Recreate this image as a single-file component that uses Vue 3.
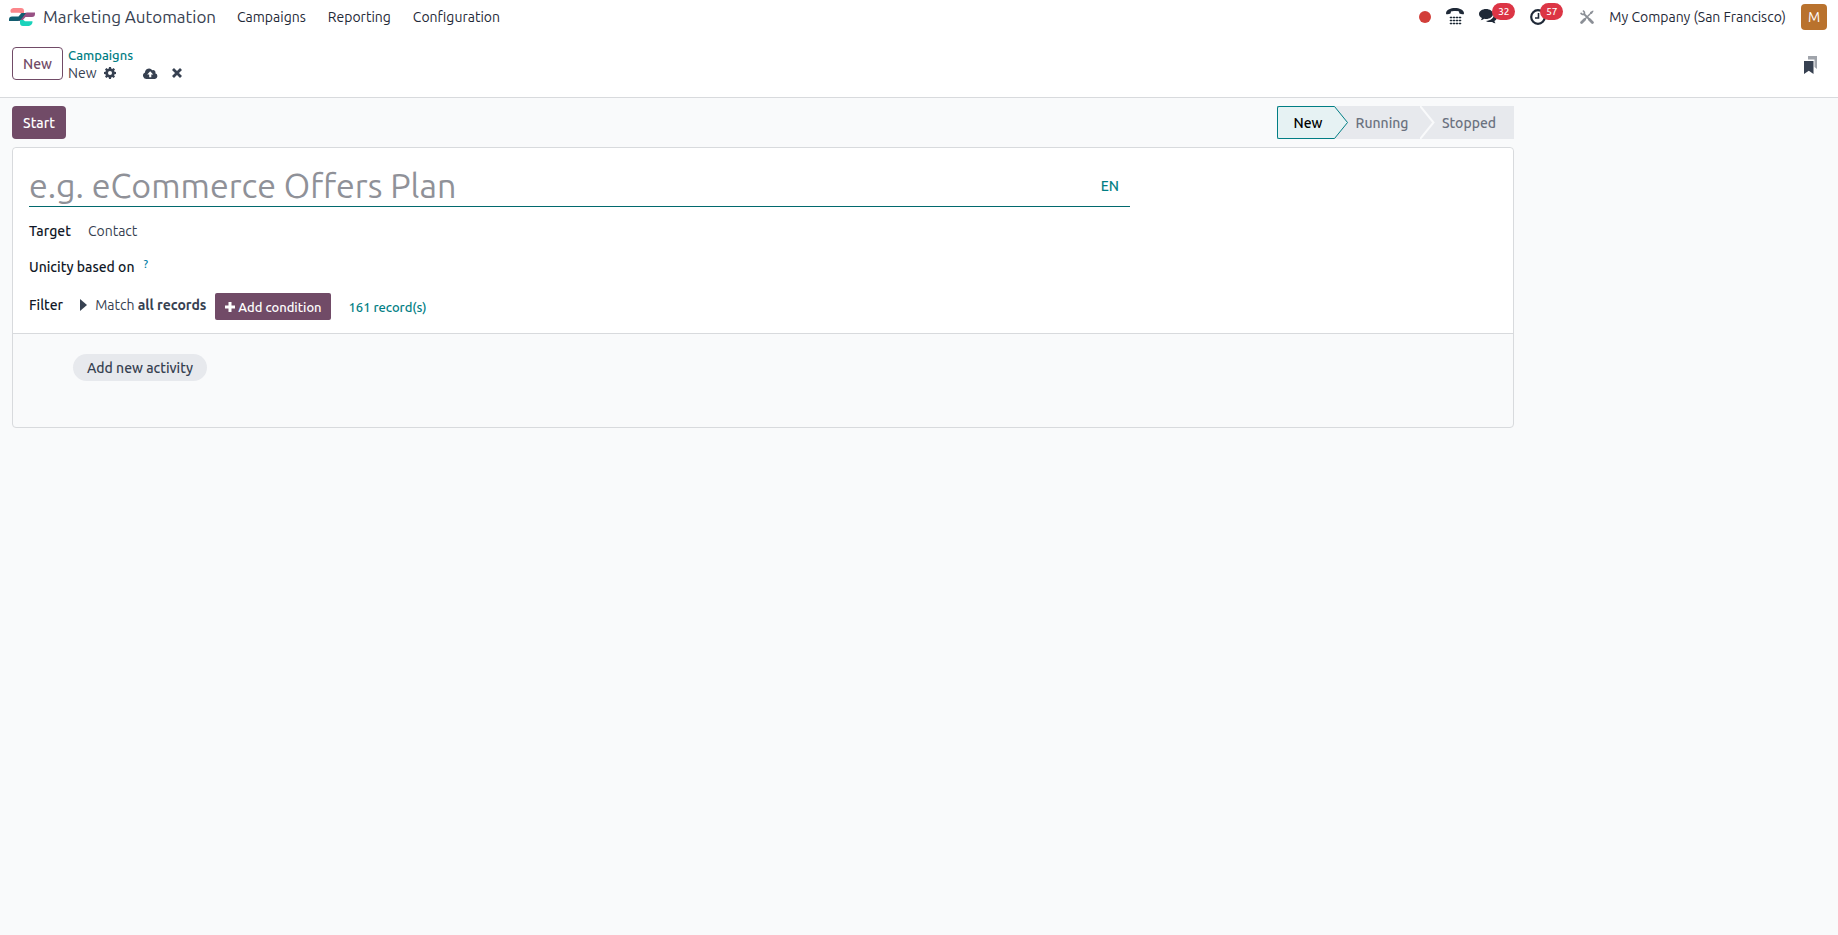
<script setup>
import { ref } from 'vue'

const name = ref('')
const menus = ['Campaigns', 'Reporting', 'Configuration']
const stages = ['New', 'Running', 'Stopped']
const current = ref('New')
</script>

<template>
  <div class="app">
    <header class="navbar">
      <a class="brand" href="#">
        <svg class="logo" viewBox="0 0 26 18" aria-hidden="true">
          <path d="M4.500 0H12a3 3 0 0 1 3 3v2.500h-2.500a2.500 2.500 0 0 1-2-.8H2A3 3 0 0 1 4.500 0z" fill="#fc868b" />
          <path d="M26 4.500V6a3 3 0 0 1-3 3h-6.500L13 13H9l5-6.500a5 5 0 0 1 4-2z" fill="#985184" />
          <path d="M0 13v-1.500a3 3 0 0 1 3-3h6.500L12.500 5H17l-5 6.500A4 4 0 0 1 9 13z" fill="#125d70" />
          <path d="M11 12h3.500l1.500 1.300h7.500A4.500 4.500 0 0 1 20 18h-6a3 3 0 0 1-3-3z" fill="#1ad3bb" />
        </svg>
        <span>Marketing Automation</span>
      </a>
      <nav class="menus">
        <a v-for="m in menus" :key="m" href="#">{{ m }}</a>
      </nav>
      <div class="systray">
        <button class="tray dot" aria-label="Recording"><span></span></button>
        <button class="tray phone" aria-label="Phone">
          <svg width="18" height="17" viewBox="0 0 18 17" fill="#1f2937">
            <path d="M9 0C4.500 0 1 1.800.2 4.200c-.3 1-.2 1.800.1 2 .5.300 3.700-.3 4.200-.7.500-.4.200-1.600.6-1.900C6.200 2.900 11.800 2.900 12.900 3.600c.4.300.1 1.500.6 1.900.5.400 3.700 1 4.200.7.300-.2.400-1 .1-2C17 1.800 13.500 0 9 0z" />
            <path d="M4 9h2v1H4zM7 9h2v1H7zM10 9h2v1h-2zM13 9h2v1h-2zM4 12h2v1H4zM7 12h2v1H7zM10 12h2v1h-2zM13 12h2v1h-2zM4 15h2v1H4zM7 15h2v1H7zM10 15h2v1h-2zM13 15h2v1h-2z" stroke="#1f2937" stroke-width=".5" />
          </svg>
        </button>
        <button class="tray chat" aria-label="Messages">
          <svg width="18" height="15" viewBox="0 0 18 15" fill="#1f2937">
            <path d="M7 0c3.900 0 7 2.200 7 5s-3.100 5-7 5c-.6 0-1.200-.1-1.800-.2-1 .8-2.200 1.300-3.500 1.400.6-.7 1-1.400 1.200-2.300C1.100 8 0 6.600 0 5c0-2.800 3.100-5 7-5z" />
            <path d="M15 4.500c1.800.9 3 2.300 3 3.800s-1 2.900-2.600 3.800c.2.900.6 1.500 1.200 2.200-1.300-.1-2.500-.6-3.500-1.400-2.300.5-4.500.1-6.200-1C11.500 11.800 15.400 9 15 4.500z" />
          </svg>
          <span class="badge">32</span>
        </button>
        <button class="tray clock" aria-label="Activities">
          <svg width="16" height="16" viewBox="0 0 16 16" fill="none" stroke="#1f2937">
            <circle cx="8" cy="8" r="6.800" stroke-width="2.200" />
            <path d="M8.500 4v5H5" stroke-width="1.600" />
          </svg>
          <span class="badge">57</span>
        </button>
        <button class="tray tools" aria-label="Developer tools">
          <svg width="14" height="14" viewBox="0 0 14 14" fill="none" stroke="#8b8f96">
            <path d="M1.600 12.400l3-3" stroke-width="2.800" stroke-linecap="round" />
            <path d="M5 9l5-5" stroke-width="1.400" />
            <path d="M9.500 4.500l.7-2.500L13 .4l.6.600L12 3.800z" fill="#8b8f96" stroke="none" />
            <path d="M3.500 3.500l6 6" stroke-width="1.800" />
            <path d="M.8 2.800a2.300 2.300 0 0 0 3.400 1.400A2.300 2.300 0 0 0 2.800.8" stroke-width="1.600" />
            <path d="M9.500 9.500l2.900 2.900" stroke-width="2.800" stroke-linecap="round" />
          </svg>
        </button>
        <button class="tray company">My Company (San Francisco)</button>
        <button class="avatar" aria-label="User menu">M</button>
      </div>
    </header>

    <section class="control">
      <button class="btn outline">New</button>
      <div class="crumbs">
        <a href="#">Campaigns</a>
        <div class="here">
          <span>New</span>
          <button class="icon" aria-label="Actions">
            <svg width="12" height="12" viewBox="0 0 12 12">
              <g fill="#374151">
                <circle cx="6" cy="6" r="4.600" />
                <path d="M5 0h2l.4 2.500h-2.800zM5 12h2l.4-2.500h-2.800zM0 5v2l2.500.4v-2.800zM12 5v2l-2.500.4v-2.800z" />
                <path d="M1 2.400L2.400 1l2 1.400-2 2zM9.600 1L11 2.400l-1.400 2-2-2zM1 9.600L2.400 11l2-1.400-2-2zM9.600 11L11 9.600l-1.400-2-2 2z" />
              </g>
              <circle cx="6" cy="6" r="2" fill="#fff" />
            </svg>
          </button>
          <button class="icon save" aria-label="Save">
            <svg width="15" height="11" viewBox="0 0 15 11">
              <path d="M3.500 11A3.400 3.400 0 0 1 2 4.500 4 4 0 0 1 9.300 2.200a2.300 2.300 0 0 1 3 3A3 3 0 0 1 12 11z" fill="#374151" />
              <path d="M7.200 3.200l3 3.200H8.300V9.200H6.200V6.400H4.200z" fill="#fff" />
            </svg>
          </button>
          <button class="icon discard" aria-label="Discard">
            <svg width="10" height="10" viewBox="0 0 10 10" stroke="#374151" stroke-width="2.800">
              <path d="M1 1l8 8M9 1l-8 8" />
            </svg>
          </button>
        </div>
      </div>
      <button class="icon bookmark" aria-label="Bookmarks">
        <svg width="13" height="18" viewBox="0 0 13 18">
          <path d="M4 0h9v13l-2.500-2V3.500H4z" fill="#a0a4ab" />
          <path d="M0 5h9.500v13L4.800 14.800 0 18z" fill="#374151" />
        </svg>
      </button>
    </section>

    <main class="content">
      <div class="form">
        <div class="statusbar">
          <button class="btn primary">Start</button>
          <div class="stages">
            <button
              v-for="s in stages"
              :key="s"
              class="stage"
              :class="{ active: s === current }"
              @click="current = s"
            >
              <svg v-if="s !== 'Stopped'" class="arrow" width="15" height="33" viewBox="0 0 15 33" aria-hidden="true">
                <path d="M0 .5h.5L13.500 16.500.5 32.500H0" />
              </svg>
              <span>{{ s }}</span>
            </button>
          </div>
        </div>

        <div class="sheet">
          <div class="fields">
            <div class="title">
              <input v-model="name" aria-label="Campaign name" placeholder="e.g. eCommerce Offers Plan" />
              <button class="lang">EN</button>
            </div>
            <div class="row target">
              <span class="label">Target</span>
              <span class="value">Contact</span>
            </div>
            <div class="row unicity">
              <span class="label">Unicity based on</span>
              <sup>?</sup>
            </div>
            <div class="row filter">
              <span class="label">Filter</span>
              <button class="match">
                <svg width="7" height="12" viewBox="0 0 7 12"><path d="M0 0l7 6-7 6z" fill="#374151" /></svg>
                <span>Match <b>all records</b></span>
              </button>
              <button class="add">
                <svg width="10" height="10" viewBox="0 0 10 10"><path d="M3.500 0h3v3.500H10v3H6.500V10h-3V6.500H0v-3h3.500z" fill="#fff" /></svg>
                <span>Add condition</span>
              </button>
              <a class="records" href="#">161 record(s)</a>
            </div>
          </div>
          <div class="activities">
            <button class="pill">Add new activity</button>
          </div>
        </div>
      </div>
    </main>
  </div>
</template>

<style>
html,
body {
  background: #f9fafb;
}
</style>

<style scoped>
.app {
  min-height: 100vh;
  background: #f9fafb;
  color: #374151;
  font: 14px/20px Ubuntu, 'Noto Sans', sans-serif;
}
.app * {
  box-sizing: border-box;
}
button {
  margin: 0;
  padding: 0;
  border: 0;
  background: none;
  color: inherit;
  font: inherit;
  white-space: nowrap;
  cursor: pointer;
}
a {
  color: #017e84;
  text-decoration: none;
}
svg {
  display: block;
  flex: none;
}
.navbar {
  display: flex;
  align-items: center;
  height: 33px;
  padding: 0 11px 0 9px;
  background: #fff;
}
.brand {
  display: flex;
  align-items: center;
  gap: 8px;
  width: 228px;
  color: #374151;
  font-size: 17px;
  white-space: nowrap;
}
.logo {
  width: 26px;
  height: 18px;
}
.menus {
  display: flex;
  gap: 22px;
}
.menus a {
  color: #1f2937;
}
.systray {
  display: flex;
  align-items: center;
  margin-left: auto;
  color: #1f2937;
}
.tray {
  position: relative;
}
.dot span {
  display: block;
  width: 12px;
  height: 12px;
  border-radius: 50%;
  background: #d23f3a;
}
.phone {
  margin-left: 15px;
}
.chat {
  margin-left: 15px;
}
.clock {
  margin-left: 33px;
}
.badge {
  position: absolute;
  left: 13px;
  top: -6px;
  width: 23px;
  height: 17px;
  border-radius: 9px;
  background: #dc3545;
  color: #fff;
  font-size: 10px;
  font-weight: 500;
  line-height: 17px;
}
.clock .badge {
  left: 10px;
}
.tools {
  margin-left: 34px;
}
.company {
  margin-left: 15px;
}
.avatar {
  width: 26px;
  height: 26px;
  margin-left: 15px;
  border-radius: 4px;
  background: #b9722d;
  color: #fff;
}
.control {
  display: flex;
  align-items: flex-start;
  height: 65px;
  padding: 14px 12px 0;
  border-bottom: 1px solid #d8dadd;
  background: #fff;
}
.btn {
  height: 33px;
  border-radius: 4px;
  font-weight: 500;
}
.outline {
  width: 51px;
  border: 1px solid #714b67;
  color: #714b67;
}
.primary {
  width: 54px;
  background: #714b67;
  color: #fff;
}
.crumbs {
  margin-left: 5px;
  line-height: 18px;
}
.crumbs > a {
  display: block;
  font-size: 13px;
  font-weight: 500;
  line-height: 17px;
}
.here {
  display: flex;
  align-items: center;
}
.here .icon {
  margin-left: 7px;
}
.here .save {
  margin-left: 27px;
}
.here .discard {
  margin-left: 14px;
}
.bookmark {
  margin: 9px 9px 0 auto;
}
.content {
  display: grid;
  grid-template-columns: minmax(0, 1fr) 324px;
  padding: 8px 0 0 12px;
}
.statusbar {
  display: flex;
  justify-content: space-between;
  height: 33px;
}
.stages {
  display: flex;
}
.stage {
  position: relative;
  width: 86px;
  padding-left: 10px;
  background: #e7e9ed;
  color: #6b7280;
  font-weight: 500;
}
.stage:first-child {
  width: 57px;
  padding-left: 4px;
  border: 1px solid #017e84;
  border-right: 0;
  border-radius: 2px 0 0 2px;
}
.stage:last-child {
  width: 94px;
  padding-left: 4px;
}
.stage.active {
  background: #e6f2f3;
  color: #000;
}
.arrow {
  position: absolute;
  z-index: 1;
  top: 0;
  left: 100%;
  fill: #e7e9ed;
  stroke: #f9fafb;
  stroke-width: 2;
}
.stage:first-child .arrow {
  top: -1px;
}
.active .arrow {
  fill: #e6f2f3;
  stroke: #017e84;
  stroke-width: 1;
}
.sheet {
  margin-top: 8px;
  border: 1px solid #d8dadd;
  border-radius: 4px;
}
.fields {
  padding: 16px 16px 13px;
  border-bottom: 1px solid #d8dadd;
  border-radius: 4px 4px 0 0;
  background: #fff;
}
.title {
  display: flex;
  width: 75%;
  height: 43px;
  border-bottom: 1px solid #01696e;
}
.title input {
  flex: 1;
  min-width: 0;
  padding: 0;
  border: 0;
  outline: 0;
  background: none;
  color: #374151;
  font: 34px/42px Ubuntu, 'Noto Sans', sans-serif;
}
.title input::placeholder {
  color: #8f9198;
  opacity: 1;
}
.lang {
  padding: 1px 11px 0;
  color: #017e84;
  font-weight: 500;
}
.row {
  display: flex;
  align-items: center;
}
.label {
  color: #111827;
  font-weight: 500;
}
.target {
  gap: 17px;
  margin-top: 14px;
}
.unicity {
  gap: 9px;
  margin-top: 16px;
}
sup {
  color: #0180a5;
  font-size: 11px;
  font-weight: 500;
  line-height: 12px;
  margin-bottom: 6px;
}
.filter {
  align-items: flex-start;
  height: 27px;
  margin-top: 16px;
  line-height: 24px;
}
.match {
  display: flex;
  align-items: center;
  gap: 8px;
  margin-left: 17px;
}
.match b {
  font-weight: 700;
}
.add {
  display: flex;
  align-items: center;
  justify-content: center;
  gap: 3px;
  width: 116px;
  height: 27px;
  margin-left: 9px;
  border-radius: 2px;
  background: #714b67;
  color: #fff;
  font-size: 13px;
  font-weight: 500;
}
.records {
  margin-left: 17px;
  font-size: 13px;
  font-weight: 500;
  line-height: 28px;
}
.activities {
  padding: 20px 60px 46px;
}
.pill {
  width: 134px;
  height: 27px;
  border-radius: 14px;
  background: #e7e9ed;
  font-weight: 500;
}
</style>
